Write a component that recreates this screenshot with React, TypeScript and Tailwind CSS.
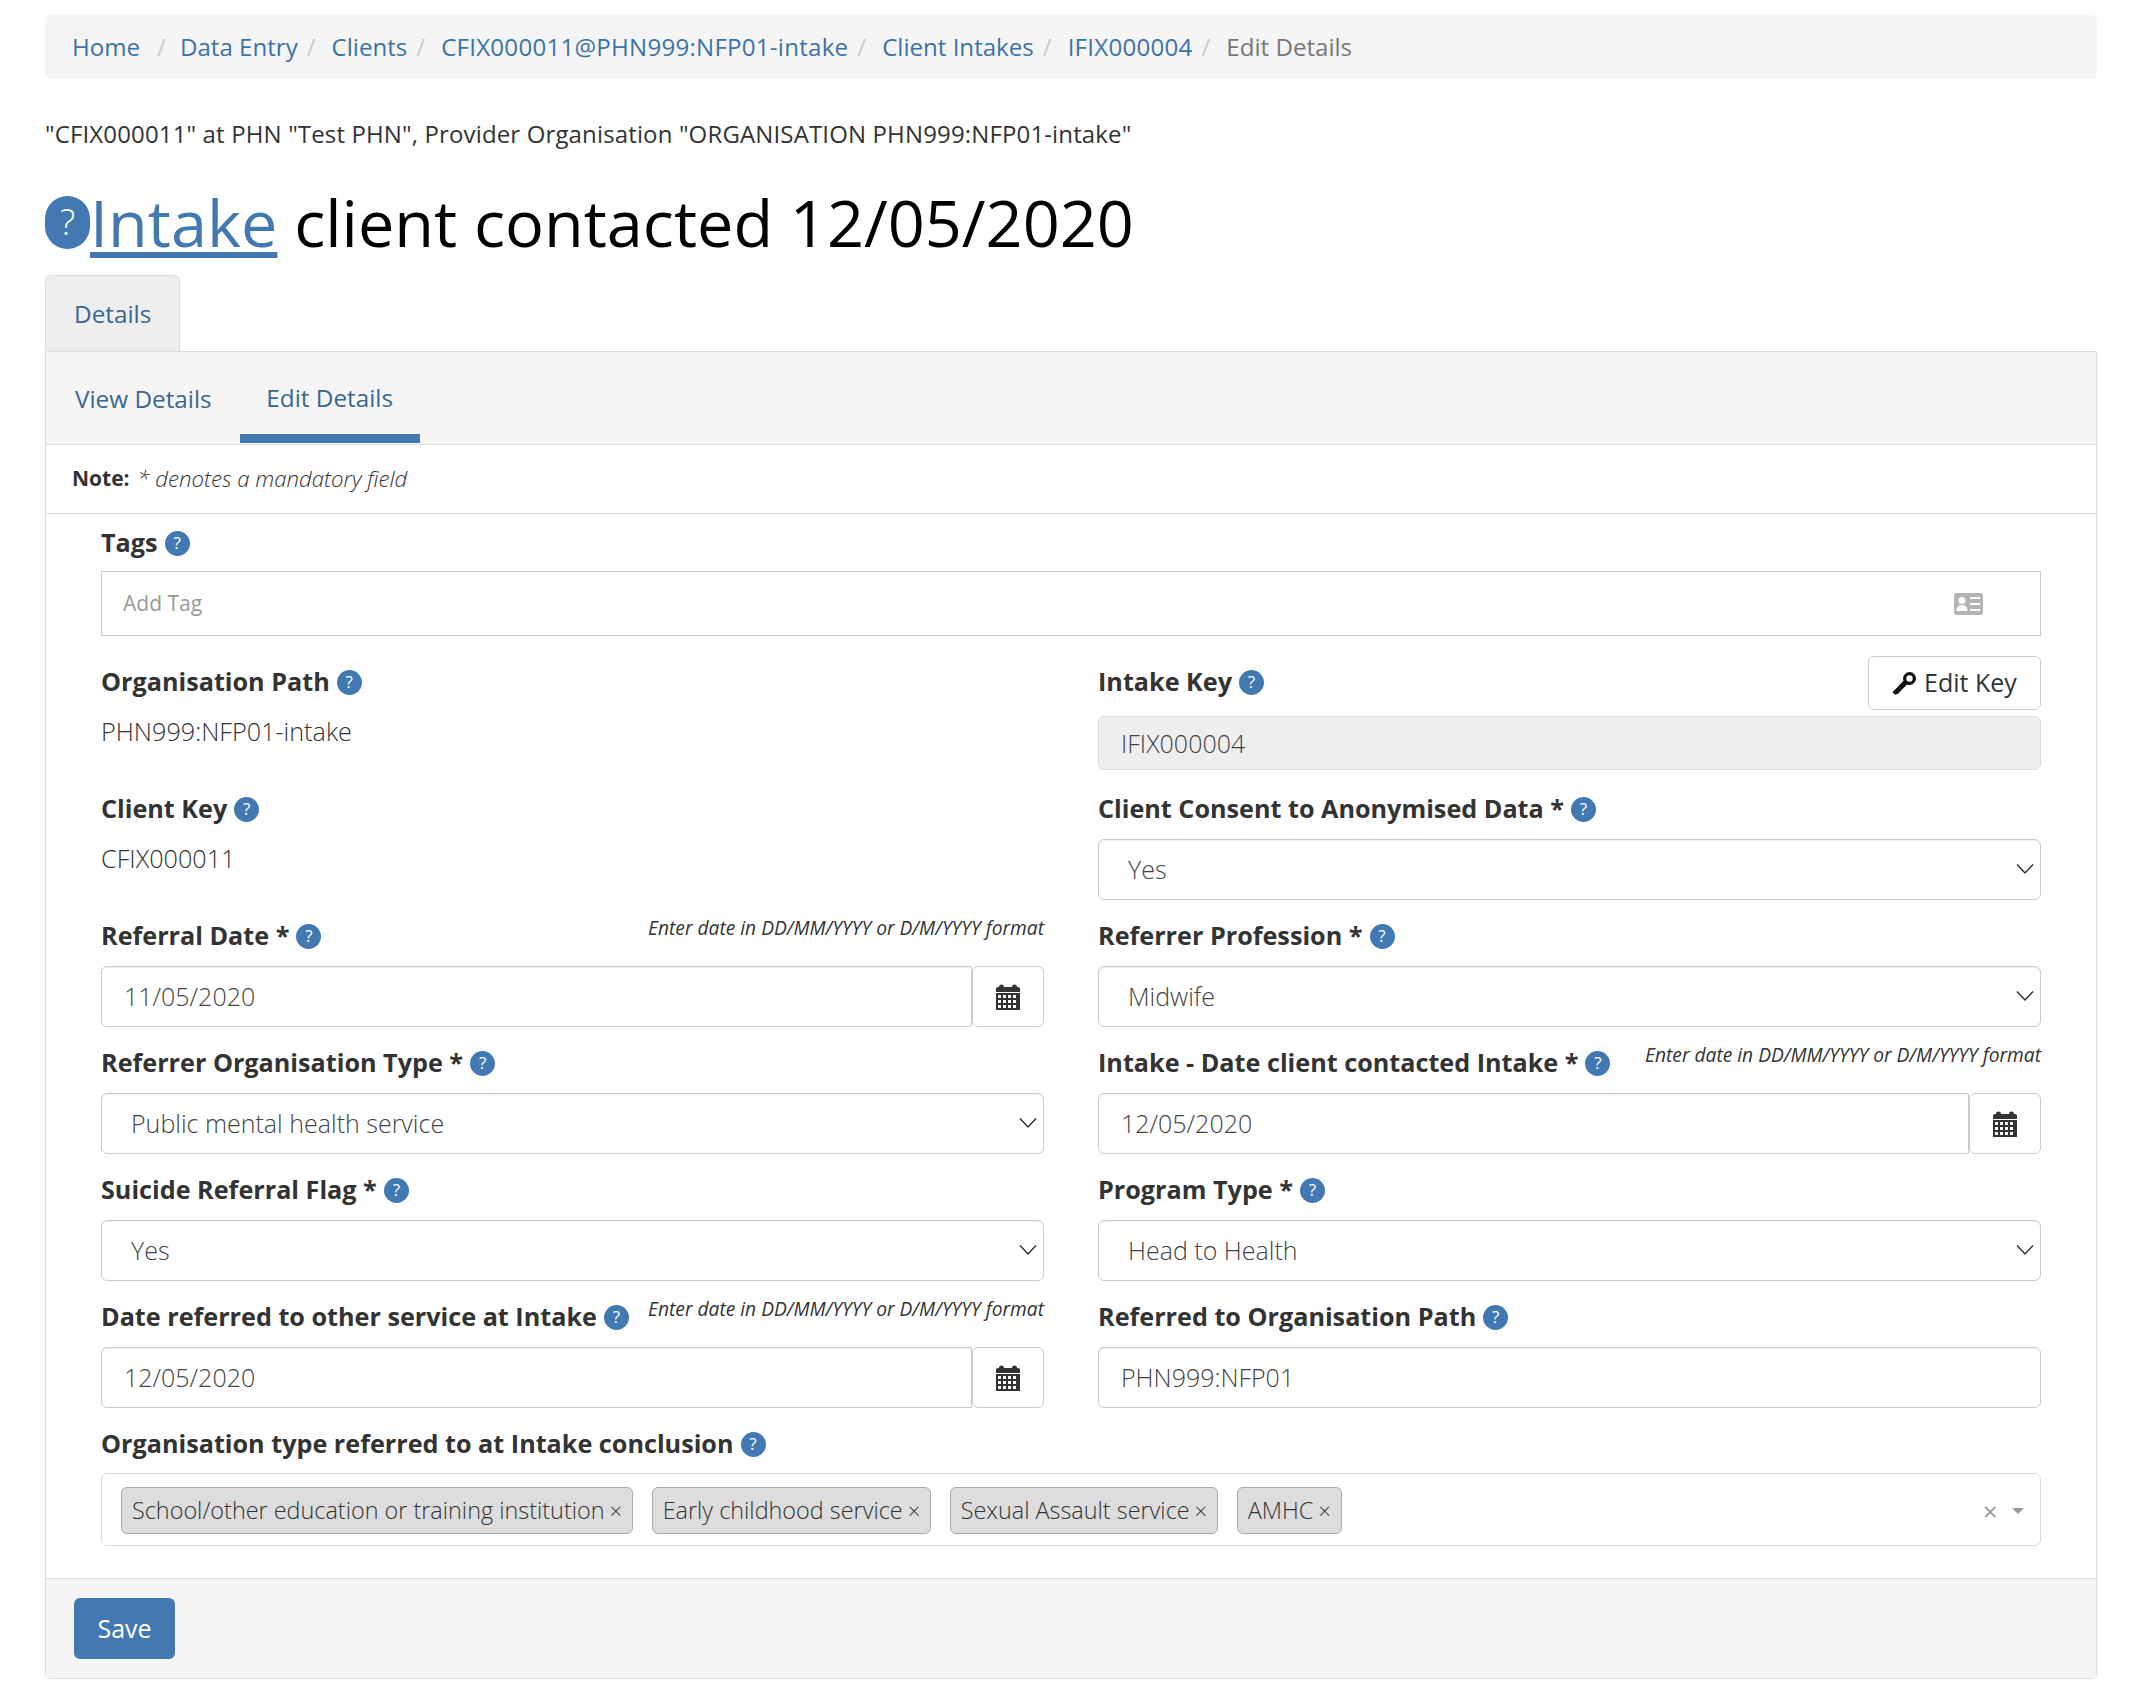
import type { ReactNode } from "react";

const HINT = "Enter date in DD/MM/YYYY or D/M/YYYY format";

const Help = () => (
  <span className="ml-[7px] inline-flex h-[25px] w-[25px] shrink-0 items-center justify-center rounded-full bg-[#4379b2] text-[17px] font-normal text-white">
    ?
  </span>
);

const Label = ({ children }: { children: ReactNode }) => (
  <label className="flex h-10 items-center whitespace-nowrap text-[25.2px] font-bold text-[#333]">
    {children}
    <Help />
  </label>
);

const CalendarIcon = () => (
  <svg width="24" height="26" viewBox="0 0 24 26" fill="#333">
    <path d="M3 3a2.500 2.500 0 0 1 5 0h8a2.500 2.500 0 0 1 5 0h1a2 2 0 0 1 2 2v3H0V5a2 2 0 0 1 2-2z" />
    <path
      fillRule="evenodd"
      d="M0 9h24v17H0zM2 11v3h3v-3zm5 0v3h3v-3zm5 0v3h3v-3zm5 0v3h3v-3zM2 16v3h3v-3zm5 0v3h3v-3zm5 0v3h3v-3zm5 0v3h3v-3zM2 21v3h3v-3zm5 0v3h3v-3zm5 0v3h3v-3zm5 0v3h3v-3z"
    />
  </svg>
);

const KeyIcon = () => (
  <svg width="25" height="25" viewBox="0 0 25 25" fill="#111">
    <path
      fillRule="evenodd"
      d="M17.500 1a6.500 6.500 0 1 1-2.500 12.500L5.500 23.200l-1.600-.3-.8 1-2.600-2.600L11.500 9.700A6.500 6.500 0 0 1 17.500 1zm0 3.300a3.200 3.200 0 1 0 0 6.400 3.200 3.200 0 0 0 0-6.400z"
    />
  </svg>
);

const CardIcon = () => (
  <svg width="29" height="22" viewBox="0 0 29 22">
    <rect width="29" height="22" rx="3" fill="#b4b4b4" />
    <circle cx="8" cy="7.500" r="3.500" fill="#fff" />
    <path d="M2.500 18c0-4 2-6 5.500-6s5.500 2 5.500 6z" fill="#fff" />
    <path d="M16 5h10M16 11h10M16 17h10" stroke="#fff" strokeWidth="2" />
  </svg>
);

const TextInput = ({ value, disabled }: { value: string; disabled?: boolean }) => (
  <input
    readOnly
    value={value}
    className={`h-[61px] w-full rounded-[6px] border border-[#ccc] pb-[1px] pl-[22px] text-[25px] font-light text-[#444] shadow-[inset_0_1px_1px_rgba(0,0,0,0.075)] ${
      disabled ? "bg-[#eee]" : "bg-white"
    }`}
  />
);

const SelectBox = ({ value }: { value: string }) => (
  <div className="relative">
    <select
      defaultValue={value}
      className="h-[61px] w-full appearance-none rounded-[6px] border border-[#ccc] bg-white pl-[29px] text-[25px] font-light text-[#444] shadow-[inset_0_1px_1px_rgba(0,0,0,0.075)]"
    >
      <option>{value}</option>
    </select>
    <svg
      className="absolute right-[7px] top-[24px]"
      width="18"
      height="12"
      viewBox="0 0 18 12"
      fill="none"
      stroke="#333"
      strokeWidth="1.500"
    >
      <path d="M1 1.500l8 8.500 8-8.500" />
    </svg>
  </div>
);

const DateInput = ({ value }: { value: string }) => (
  <div className="flex h-[61px]">
    <input
      readOnly
      value={value}
      className="h-full min-w-0 flex-1 rounded-l-[6px] border border-[#ccc] bg-white pb-[1px] pl-[22px] text-[25px] font-light text-[#444] shadow-[inset_0_1px_1px_rgba(0,0,0,0.075)]"
    />
    <span className="flex h-full w-[72px] items-center justify-center rounded-[6px] border border-[#ccc] bg-white">
      <CalendarIcon />
    </span>
  </div>
);

const Field = ({
  label,
  hint,
  children,
}: {
  label: ReactNode;
  hint?: boolean;
  children: ReactNode;
}) => (
  <div className="h-[127px]">
    <div className="flex justify-between">
      <Label>{label}</Label>
      {hint && (
        <span className="whitespace-nowrap text-[19.2px] italic leading-[24px] text-[#333]">{HINT}</span>
      )}
    </div>
    <div className="mt-[10px]">{children}</div>
  </div>
);

const Chip = ({ text }: { text: string }) => (
  <span className="flex h-[47px] items-center whitespace-nowrap rounded-[6px] border border-[#aaa] bg-[#ddd] px-[10px] text-[23.4px] font-light text-[#333]">
    {text}
    <span className="ml-[5px] text-[22px]">×</span>
  </span>
);

const crumbs = [
  "Home",
  "Data Entry",
  "Clients",
  "CFIX000011@PHN999:NFP01-intake",
  "Client Intakes",
  "IFIX000004",
];

export default function App() {
  return (
    <div className="ml-[45px] w-[2052px] pt-[15px] font-['Open_Sans',sans-serif] text-[#333]">
      <nav className="flex h-[64px] items-center rounded-[6px] bg-[#f5f5f5] pl-[27px] text-[24.1px]">
        {crumbs.map((c, i) => (
          <span key={c} className="flex items-center">
            <a className={`text-[#3b73a8] ${c.includes("000") ? "tracking-[0.24px]" : ""}`}>{c}</a>
            <span className={`text-[#ccc] ${i === 0 ? "ml-[17px] mr-[14px]" : "ml-[9px] mr-[16px]"}`}>/</span>
          </span>
        ))}
        <span className="text-[#777]">Edit Details</span>
      </nav>

      <p className="mt-[36px] text-[24px] leading-[38px] tracking-[0.14px]">
        "CFIX000011" at PHN "Test PHN", Provider Organisation "ORGANISATION PHN999:NFP01-intake"
      </p>

      <h1 className="mt-[24px] flex h-[90px] items-center whitespace-pre text-[64.8px] leading-[90px] text-black">
        <span className="flex h-[53px] w-[45px] items-center justify-center rounded-full bg-[#4379b2] text-[36px] font-light text-white">
          ?
        </span>
        <a className="text-[#4379b2] underline decoration-[6px] underline-offset-[5px]">Intake</a> client contacted 12/05/2020
      </h1>

      <div className="mt-[8px] flex h-[76px] w-[135px] items-center rounded-t-[6px] border border-b-0 border-[#ddd] bg-[#eee] pl-[28px] pt-[2px] text-[24.3px] text-[#3a6791]">
        Details
      </div>

      <section className="rounded-b-[6px] border border-[#ddd] shadow-[0_1px_2px_rgba(0,0,0,0.08)]">
        <div className="flex h-[93px] items-end border-b border-[#ddd] bg-[#f5f5f5] pl-[29px] text-[24.3px] text-[#3a6791]">
          <a className="mb-[2px] h-[66px] pt-[5px]">View Details</a>
          <a className="mb-[1px] ml-[28px] flex h-[66px] w-[180px] justify-center border-b-[9px] border-[#4379b2] pt-[3px]">
            Edit Details
          </a>
        </div>

        <div className="flex h-[69px] items-center border-b border-[#ddd] pl-[26px] text-[21px]">
          <b>Note:</b>
          <i className="ml-[8px] text-[22.2px] font-light">* denotes a mandatory field</i>
        </div>

        <div className="px-[55px] pt-[9px]">
          <div className="h-[139px]">
            <Label>Tags</Label>
            <div className="mt-[8px] flex h-[65px] items-center justify-between border border-[#ccc] pl-[21px] pr-[57px]">
              <input readOnly placeholder="Add Tag" className="flex-1 text-[21px] placeholder:text-[#999]" />
              <CardIcon />
            </div>
          </div>

          <div className="grid grid-cols-2 gap-x-[54px]">
            <div className="h-[127px]">
              <Label>Organisation Path</Label>
              <p className="mt-[2px] text-[25.2px] font-light leading-[54px]">PHN999:NFP01-intake</p>
            </div>
            <div className="h-[127px]">
              <div className="flex h-[54px] justify-between">
                <Label>Intake Key</Label>
                <button className="-mt-[6px] flex h-[54px] w-[173px] items-center justify-center gap-[7px] rounded-[6px] border border-[#ccc] bg-white text-[25px]">
                  <KeyIcon />
                  Edit Key
                </button>
              </div>
              <input
                readOnly
                value="IFIX000004"
                className="h-[54px] w-full rounded-[6px] border border-[#ddd] bg-[#eee] pb-[1px] pl-[22px] text-[25px] font-light text-[#444]"
              />
            </div>

            <div className="h-[127px]">
              <Label>Client Key</Label>
              <p className="mt-[2px] text-[25.2px] font-light leading-[54px]">CFIX000011</p>
            </div>
            <Field label="Client Consent to Anonymised Data *">
              <SelectBox value="Yes" />
            </Field>

            <Field label="Referral Date *" hint>
              <DateInput value="11/05/2020" />
            </Field>
            <Field label="Referrer Profession *">
              <SelectBox value="Midwife" />
            </Field>

            <Field label="Referrer Organisation Type *">
              <SelectBox value="Public mental health service" />
            </Field>
            <Field label="Intake - Date client contacted Intake *" hint>
              <DateInput value="12/05/2020" />
            </Field>

            <Field label="Suicide Referral Flag *">
              <SelectBox value="Yes" />
            </Field>
            <Field label="Program Type *">
              <SelectBox value="Head to Health" />
            </Field>

            <Field label="Date referred to other service at Intake" hint>
              <DateInput value="12/05/2020" />
            </Field>
            <Field label="Referred to Organisation Path">
              <TextInput value="PHN999:NFP01" />
            </Field>
          </div>

          <Label>Organisation type referred to at Intake conclusion</Label>
          <div className="mt-[9px] flex h-[73px] items-center gap-[18.5px] rounded-[6px] border border-[#ddd] pl-[19px] pr-[16px] pt-[2px]">
            <Chip text="School/other education or training institution" />
            <Chip text="Early childhood service" />
            <Chip text="Sexual Assault service" />
            <Chip text="AMHC" />
            <span className="ml-auto text-[26px] leading-none text-[#999]">×</span>
            <span className="ml-[-4px] h-0 w-0 border-x-[6px] border-t-[6px] border-x-transparent border-t-[#999]" />
          </div>
        </div>

        <div className="mt-[32px] h-[100px] border-t border-[#ddd] bg-[#f5f5f5] pl-[28px] pt-[19px]">
          <button className="h-[61px] w-[101px] rounded-[6px] bg-[#4379b2] pt-[1px] text-[25px] text-white">Save</button>
        </div>
      </section>
    </div>
  );
}
